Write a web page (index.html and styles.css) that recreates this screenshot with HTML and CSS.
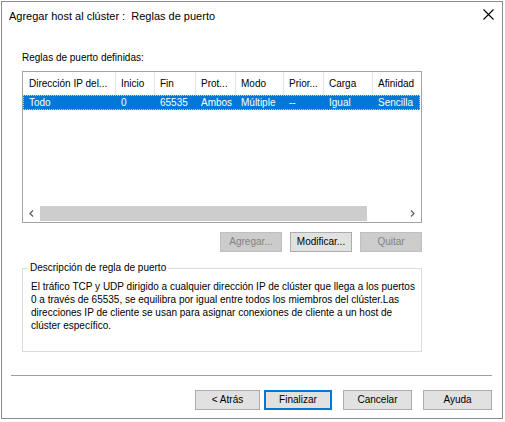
FILE: index.html
```html
<!DOCTYPE html>
<html lang="es">
<head>
<meta charset="utf-8">
<title>Agregar host al clúster</title>
<link rel="stylesheet" href="styles.css">
</head>
<body>
<div class="window">
  <div class="titlebar">
    <span class="title">Agregar host al clúster :&nbsp; Reglas de puerto</span>
    <svg class="close" width="11" height="11" viewBox="0 0 11 11"><path d="M0.5 0.5 L10.5 10.5 M10.5 0.5 L0.5 10.5" stroke="#000" stroke-width="1.1" fill="none"/></svg>
  </div>
  <div class="content">
    <div class="label">Reglas de puerto definidas:</div>
    <div class="list">
      <div class="lv-row lv-header">
        <div class="cell c1">Dirección IP del...</div>
        <div class="cell c2">Inicio</div>
        <div class="cell c3">Fin</div>
        <div class="cell c4">Prot...</div>
        <div class="cell c5">Modo</div>
        <div class="cell c6">Prior...</div>
        <div class="cell c7">Carga</div>
        <div class="cell c8">Afinidad</div>
      </div>
      <div class="lv-row lv-item selected">
        <div class="cell c1">Todo</div>
        <div class="cell c2">0</div>
        <div class="cell c3">65535</div>
        <div class="cell c4">Ambos</div>
        <div class="cell c5">Múltiple</div>
        <div class="cell c6">--</div>
        <div class="cell c7">Igual</div>
        <div class="cell c8">Sencilla</div>
      </div>
      <div class="lv-fill"></div>
      <div class="hscroll">
        <div class="sb-btn"><svg width="5" height="7" viewBox="0 0 5 7"><path d="M4 0.5 L1 3.5 L4 6.5" stroke="#606060" stroke-width="1.3" fill="none"/></svg></div>
        <div class="sb-track"><div class="sb-thumb"></div></div>
        <div class="sb-btn"><svg width="5" height="7" viewBox="0 0 5 7"><path d="M1 0.5 L4 3.5 L1 6.5" stroke="#606060" stroke-width="1.3" fill="none"/></svg></div>
      </div>
    </div>
    <div class="list-buttons">
      <button class="btn disabled">Agregar...</button>
      <button class="btn">Modificar...</button>
      <button class="btn disabled">Quitar</button>
    </div>
    <fieldset class="desc">
      <legend>Descripción de regla de puerto</legend>
      <p>El tráfico TCP y UDP dirigido a cualquier dirección IP de clúster que llega a los puertos<br>0 a través de 65535, se equilibra por igual entre todos los miembros del clúster.Las<br>direcciones IP de cliente se usan para asignar conexiones de cliente a un host de<br>clúster específico.</p>
    </fieldset>
  </div>
  <div class="separator"></div>
  <div class="footer">
    <button class="btn back">&lt; Atrás</button>
    <button class="btn finish">Finalizar</button>
    <button class="btn cancel">Cancelar</button>
    <button class="btn help">Ayuda</button>
  </div>
</div>
</body>
</html>
```

FILE: styles.css
```css
html, body {
  margin: 0;
  padding: 0;
  background: #ffffff;
}
body {
  font-family: "Liberation Sans", Arial, sans-serif;
  font-size: 10px;
  color: #000;
  overflow: hidden;
}
.window {
  margin: 1px 0 0 1px;
  width: 502px;
  height: 418px;
  box-sizing: border-box;
  border: 1px solid #8c8c8c;
  background: #fff;
  display: flex;
  flex-direction: column;
}
.titlebar {
  height: 28px;
  flex: none;
  display: flex;
  align-items: center;
  justify-content: space-between;
  padding: 0 8px 0 7px;
}
.title {
  font-size: 11px;
  line-height: 28px;
  white-space: nowrap;
}
.close {
  display: block;
  margin-top: -3px;
}
.content {
  padding: 22px 0 0 20px;
}
.label {
  font-size: 10px;
  line-height: 12px;
  height: 12px;
  margin-bottom: 7px;
}
.list {
  width: 400px;
  height: 152px;
  box-sizing: border-box;
  border: 1px solid #a3a3a3;
  display: flex;
  flex-direction: column;
  overflow: hidden;
}
.lv-row {
  display: flex;
  flex: none;
  width: 410px;
}
.lv-header {
  height: 23px;
  line-height: 23px;
}
.lv-header .cell {
  border-right: 1px solid #e5e5e5;
}
.cell {
  flex: none;
  box-sizing: border-box;
  padding-left: 5px;
  white-space: nowrap;
  overflow: hidden;
}
.c1 { width: 93px; padding-left: 6px; }
.c2 { width: 39px; }
.c3 { width: 41px; }
.c4 { width: 40px; }
.c5 { width: 48px; }
.c6 { width: 40px; }
.c7 { width: 49px; }
.c8 { width: 60px; }
.lv-item {
  height: 15px;
  line-height: 15px;
}
.lv-item .cell {
  border-right: 1px solid transparent;
}
.selected {
  background: #0078d7;
  color: #fff;
  outline: 1px dotted #e9c77f;
  outline-offset: -1px;
  width: 397px;
  overflow: hidden;
}
.lv-fill {
  flex: 1;
}
.hscroll {
  flex: none;
  height: 17px;
  display: flex;
  align-items: center;
  margin-bottom: 0;
}
.sb-btn {
  width: 17px;
  height: 17px;
  flex: none;
  display: flex;
  align-items: center;
  justify-content: center;
}
.sb-btn svg { display: block; }
.sb-track {
  flex: 1;
  height: 17px;
  display: flex;
  align-items: center;
}
.sb-thumb {
  width: 327px;
  height: 15px;
  background: #cdcdcd;
}
.list-buttons {
  width: 400px;
  margin-top: 9px;
  display: flex;
  justify-content: flex-end;
  gap: 8px;
}
.btn {
  font-family: "Liberation Sans", Arial, sans-serif;
  font-size: 10px;
  height: 20px;
  width: 62px;
  padding: 0;
  margin: 0;
  box-sizing: border-box;
  background: #e1e1e1;
  border: 1px solid #adadad;
  color: #000;
  line-height: 18px;
  text-align: center;
  white-space: nowrap;
}
.btn.disabled {
  background: #cccccc;
  border-color: #bfbfbf;
  color: #838383;
}
.desc {
  margin: 10px 0 0 0;
  width: 400px;
  box-sizing: border-box;
  border: 1px solid #dcdcdc;
  padding: 6px 9px 19px 8px;
  min-width: 0;
}
.desc legend {
  font-size: 10px;
  line-height: 12px;
  padding: 0 2px;
  margin-left: -3px;
}
.desc p {
  margin: 0;
  height: 52px;
  line-height: 13px;
  white-space: nowrap;
}
.separator {
  margin: 23px 0 0 9px;
  width: 481px;
  height: 1px;
  background: #a0a0a0;
  flex: none;
}
.footer {
  margin: 14px 0 0 9px;
  width: 481px;
  display: flex;
  justify-content: flex-end;
}
.back { width: 65px; }
.finish {
  width: 68px;
  margin-left: 4px;
  border: 1px solid #0078d7;
  box-shadow: inset 0 0 0 1px #0078d7;
}
.cancel { width: 69px; margin-left: 11px; }
.help { width: 69px; margin-left: 11px; }
```
